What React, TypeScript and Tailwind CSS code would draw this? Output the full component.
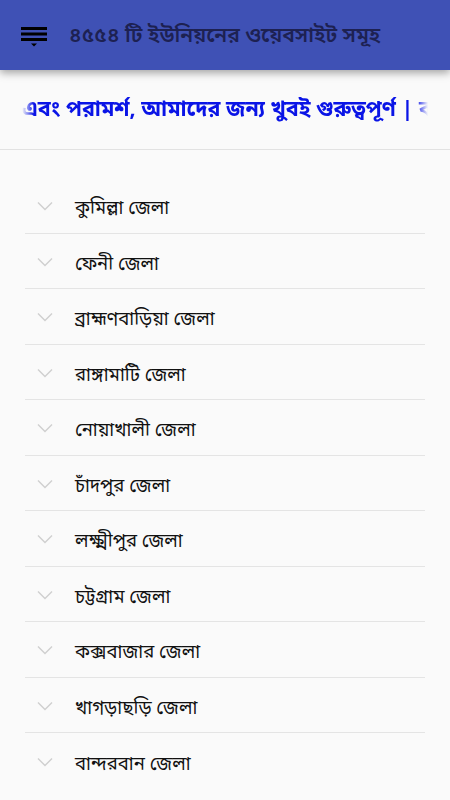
import React from 'react';

const districts = [
  'কুমিল্লা জেলা',
  'ফেনী জেলা',
  'ব্রাহ্মণবাড়িয়া জেলা',
  'রাঙ্গামাটি জেলা',
  'নোয়াখালী জেলা',
  'চাঁদপুর জেলা',
  'লক্ষ্মীপুর জেলা',
  'চট্টগ্রাম জেলা',
  'কক্সবাজার জেলা',
  'খাগড়াছড়ি জেলা',
  'বান্দরবান জেলা',
];

const font = { fontFamily: '"Noto Sans", "Noto Sans Bengali", "Lohit Bengali", sans-serif' };

const MenuIcon: React.FC = () => (
  <svg width="26" height="22" viewBox="0 0 26 22" className="block">
    <rect x="0" y="0" width="26" height="3" fill="#000" />
    <rect x="0" y="5.5" width="26" height="3" fill="#000" />
    <rect x="0" y="11" width="26" height="3" fill="#000" />
    <polygon points="10,16.5 16,16.5 13,19.5" fill="#000" />
  </svg>
);

const Chevron: React.FC = () => (
  <svg width="16" height="10" viewBox="0 0 16 10" className="block">
    <polyline points="1,1.5 8,8.5 15,1.5" fill="none" stroke="#cfcfcf" strokeWidth="1.4" />
  </svg>
);

const App: React.FC = () => {
  return (
    <div className="w-[450px] h-[800px] overflow-hidden bg-[#fafafa]" style={font}>
      {/* Toolbar */}
      <div className="relative z-10 h-[70px] bg-[#3f51b5] flex items-center shadow-[0_3px_8px_rgba(0,0,0,0.35)]">
        <div className="pl-[21px] pt-[6px]">
          <MenuIcon />
        </div>
        <div className="ml-[22px] text-[21px] font-semibold text-[#1d2152] whitespace-nowrap">
          ৪৫৫৪ টি ইউনিয়নের ওয়েবসাইট সমূহ
        </div>
      </div>

      {/* Marquee */}
      <div className="h-[80px] border-b border-[#e2e2e2] flex items-center px-[22px]">
        <div className="w-full overflow-hidden [mask-image:linear-gradient(to_right,transparent,black_12px,black_calc(100%-12px),transparent)]">
          <div className="whitespace-nowrap text-[21.5px] font-bold text-[#0a14e6] leading-none pb-[4px]">
            এবং পরামর্শ, আমাদের জন্য খুবই গুরুত্বপূর্ণ | বাংলাদেশের সকল ইউনিয়নের ওয়েবসাইট
          </div>
        </div>
      </div>

      {/* District list */}
      <div className="pt-[28px] px-[25px]">
        {districts.map((d) => (
          <div key={d} className="h-[55.5px] border-b border-[#e4e4e4] last:border-b-0 flex items-center">
            <div className="w-[50px] pl-[12px] pt-[2px] flex items-center">
              <Chevron />
            </div>
            <div className="text-[18.5px] text-[#111] leading-none pt-[4px]">{d}</div>
          </div>
        ))}
      </div>
    </div>
  );
};

export default App;
